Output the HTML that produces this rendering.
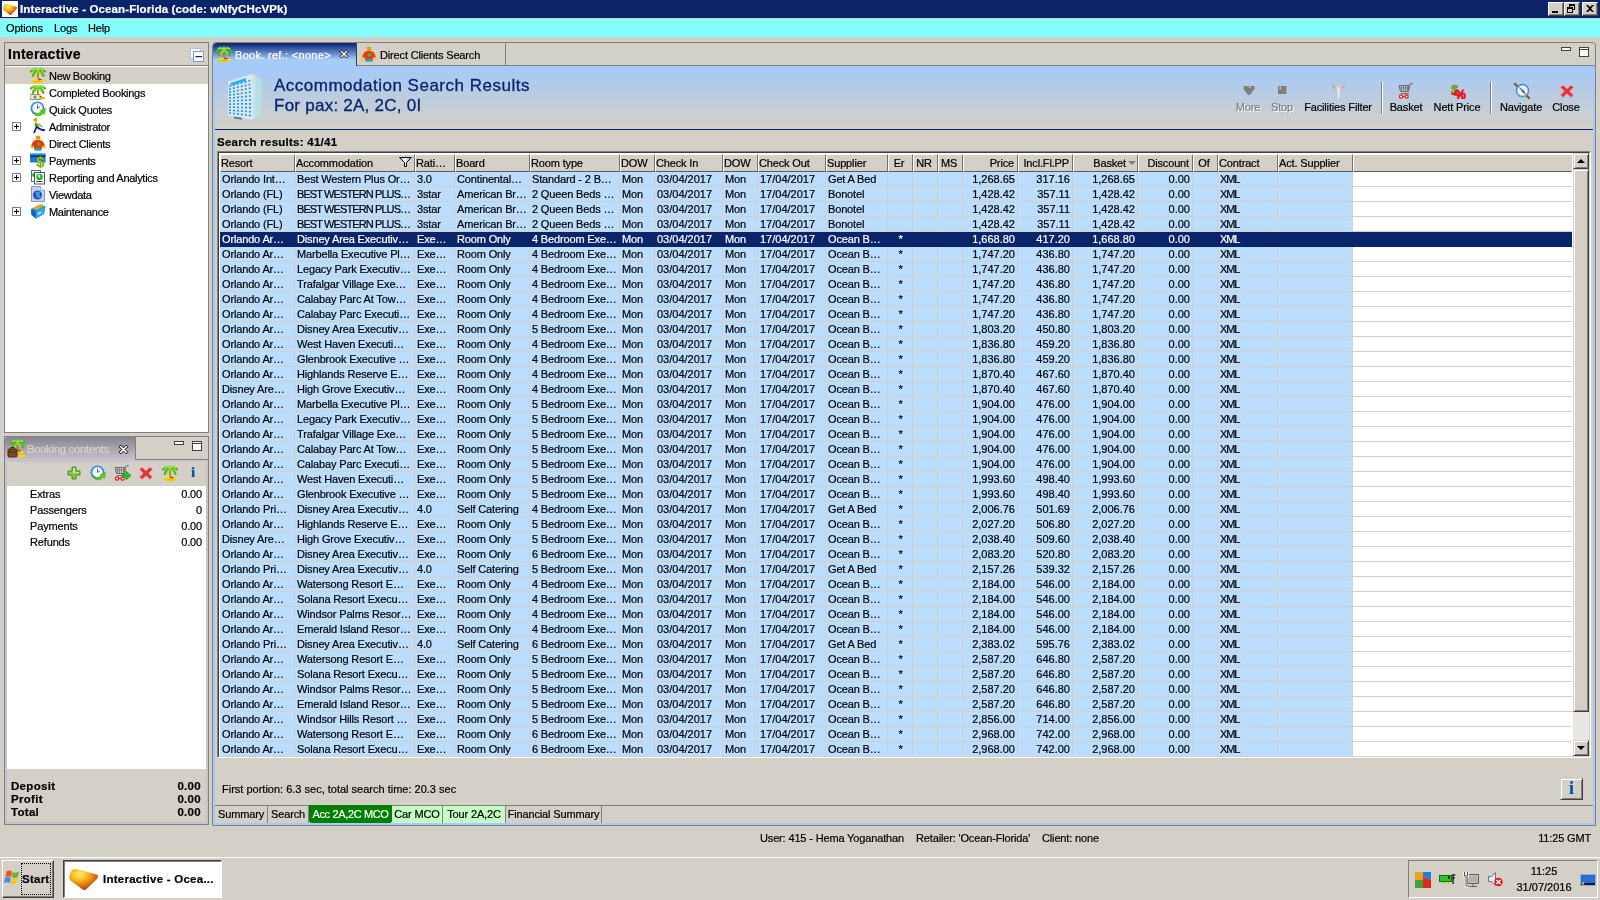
<!DOCTYPE html>
<html><head><meta charset="utf-8"><title>Interactive - Ocean-Florida</title>
<style>
*{box-sizing:border-box;margin:0;padding:0}
html,body{width:1600px;height:900px;overflow:hidden;background:#D4D0C8;font:11px "Liberation Sans","DejaVu Sans",sans-serif;color:#000;letter-spacing:-.15px;-webkit-text-stroke:.2px}
.a{position:absolute}
b,.b{font-weight:bold;font-size:11.5px;letter-spacing:.25px}
#title{left:0;top:0;width:1600px;height:18px;background:#0A246A;color:#fff}
#title .t{left:20px;top:3px;white-space:nowrap;letter-spacing:.12px}
#menu{left:0;top:18px;width:1600px;height:19px;background:#84FFFF;border-top:1px solid #D4D0C8}
#menu span{position:absolute;top:3px}
.cap{width:16px;height:14px;top:2px;background:#D4D0C8;border:1px solid;border-color:#fff #404040 #404040 #fff;box-shadow:inset -1px -1px #808080}
/* table */
.th{position:absolute;top:154px;height:18px;background:#D4D0C8;border:1px solid;border-color:#fff #77736C #5C5954 #fff;white-space:nowrap;overflow:hidden;line-height:15px;padding:1px 3px 0 0}
.th.r{text-align:right;padding-right:3px}
.th.c{text-align:center}
.tr{position:absolute;left:220px;width:1352px;height:15px;background:#fff;border-bottom:1px solid #D4D0C8}
.td{position:absolute;top:0;height:14px;background:#BBDDFF;border-right:1px solid #D4D0C8;white-space:nowrap;overflow:hidden;line-height:14px;padding:0 1px 0 2px}
.td.r,.td.n{letter-spacing:0}
.td.r{text-align:right;padding-right:2px}
.td.u{letter-spacing:-.9px}
.td.x{letter-spacing:-1.1px}
.td.c{text-align:center}
.tr.sel{background:#0A246A;border-bottom-color:#0A246A;color:#fff}
.tr.sel .td{background:#0A246A;border-right-color:#0A246A;height:15px}
.flt{position:absolute;right:2px;top:2px}
.sortarr{position:absolute;right:1px;top:6px;width:0;height:0;border:4px solid transparent;border-top:4px solid #808080;border-bottom:0}

/* left panel */
#lp{left:4px;top:42px;width:205px;height:391px;border:1px solid #808080;background:#D4D0C8}
#lph{left:0;top:0;width:203px;height:23px;border-bottom:1px solid #808080;box-shadow:0 1px #fff}
#lph .ttl{left:3px;top:3px;font:bold 14px "Liberation Sans",sans-serif;letter-spacing:.25px}
#tree{left:0;top:24px;width:203px;height:365px;background:#fff}
.ti{position:absolute;left:0;width:203px;height:17px;line-height:19px;padding-left:44px;white-space:nowrap;letter-spacing:-.3px}
.ti.sel{background:#D4D0C8}
.ti svg{position:absolute;left:25px;top:0}
.pm{position:absolute;left:7px;top:4px;width:9px;height:9px;border:1px solid #808080;background:#fff}
.pm:before{content:"";position:absolute;left:1px;top:3px;width:5px;height:1px;background:#000}
.pm:after{content:"";position:absolute;left:3px;top:1px;width:1px;height:5px;background:#000}
/* booking contents */
#bc{left:4px;top:436px;width:205px;height:389px;border:1px solid #808080;border-top:0;background:#D4D0C8}
#bctab{left:0;top:1px;width:131px;height:23px;border-right:1px solid #808080;border-bottom:0;background:linear-gradient(#86848C,#C6C3CD);color:#D8D4CC;border-radius:3px 0 0 0}
#bcline{left:130px;top:23px;width:74px;height:1px;background:#808080}
#bctop{left:0;top:0;width:204px;height:1px;background:#808080}
#bclist{left:2px;top:50px;width:199px;height:283px;background:#fff}
.bi{position:absolute;left:0;width:199px;height:16px;line-height:16px}
.bi span{position:absolute;left:23px}
.bi em{position:absolute;right:4px;font-style:normal}
.tot{position:absolute;left:6px;width:190px;height:13px;line-height:13px;font-weight:bold;font-size:11.5px;letter-spacing:.3px}
.tot em{position:absolute;right:0;font-style:normal}
/* main panel */
#mp{left:213px;top:66px;width:1382px;height:759px;border:2px solid #A5CBF7;border-top:0;background:#D4D0C8}
#tabbar{left:212px;top:42px;width:1384px;height:784px;border:1px solid #808080;border-radius:4px 4px 0 0}
#tab1{left:213px;top:43px;width:144px;height:23px;background:linear-gradient(#0A246A 0%,#1C3A8C 12%,#A5CBF7 72%);color:#fff;border-radius:4px 0 0 0;border-right:1px solid #404040}
#tab2{left:357px;top:43px;width:149px;height:22px;border-right:1px solid #808080}
#tabline{left:357px;top:65px;width:1238px;height:1px;background:#808080}
#hdr{left:215px;top:66px;width:1378px;height:63px;background:linear-gradient(#A3C9F9 0%,#D4D0C8 100%)}
#hline{left:215px;top:129px;width:1378px;height:1px;background:#0A246A}
.h1{left:274px;color:#0A246A;-webkit-text-stroke:.3px #0A246A;font:17px "Liberation Sans",sans-serif;white-space:nowrap;letter-spacing:.5px}
.tb{position:absolute;top:101px;height:13px;line-height:13px;white-space:nowrap;text-align:center}
.tb.dis{color:#808080;text-shadow:1px 1px 0 #fff}
.tsep{position:absolute;top:82px;width:2px;height:32px;border-left:1px solid #808080;border-right:1px solid #fff}
#tblframe{left:217px;top:151px;width:1374px;height:607px;border:1px solid;border-color:#808080 #fff #fff #808080;background:#fff}
#tblframe2{left:218px;top:152px;width:1372px;height:605px;border:1px solid;border-color:#404040 #D4D0C8 #D4D0C8 #404040}
#sb{left:1573px;top:153px;width:16px;height:603px;background:#E9E7E3}
.btn3d{position:absolute;background:#D4D0C8;border:1px solid;border-color:#D4D0C8 #404040 #404040 #D4D0C8;box-shadow:inset 1px 1px #fff,inset -1px -1px #808080}
.btabs{position:absolute;top:806px;height:17px;line-height:16px;text-align:center;border-right:1px solid #808080;white-space:nowrap}
#status{left:0;top:832px;width:1600px;height:13px;line-height:13px}
/* taskbar */
#tbline{left:0;top:857px;width:1600px;height:1px;background:#fff}
#start{left:2px;top:860px;width:52px;height:38px;border-color:#fff #404040 #404040 #fff;box-shadow:inset -1px -1px #808080}
#task{left:63px;top:860px;width:159px;height:38px;background:#fff;border:1px solid;border-color:#404040 #fff #fff #404040;box-shadow:inset 1px 1px #808080}
#tray{left:1408px;top:860px;width:190px;height:38px;border:1px solid;border-color:#808080 #fff #fff #808080}
</style></head><body><div id="root" style="position:absolute;left:0;top:0;width:1600px;height:900px;will-change:transform">
<svg width="0" height="0" style="position:absolute"><defs><radialGradient id="gg" cx=".36" cy=".25" r=".75"><stop offset="0" stop-color="#FFF080"/><stop offset=".3" stop-color="#FFC828"/><stop offset=".6" stop-color="#E88A10"/><stop offset="1" stop-color="#B84008"/></radialGradient></defs></svg>

<div id="title" class="a"><div class="a" style="left:2px;top:1px;width:16px;height:16px;background:#fff"></div><svg class="a" style="left:3px;top:4px;" width="14" height="11" viewBox="0 0 28 20" preserveAspectRatio="none"><path d="M4 .5C7 -.3 10 .3 13 1.500C17 3 22 4 27.500 5.500C28.500 7 27.500 9 26 10.500L17 19C15.500 20.300 14 20.300 12.500 19L2 11.500C-.3 9.500 -.3 6.500 1.500 3.500C2.200 2 3 1 4 .5z" fill="url(#gg)"/></svg><b class="a t">Interactive - Ocean-Florida (code: wNfyCHcVPk)</b></div>
<div id="menu" class="a"><span style="left:6px">Options</span><span style="left:54px">Logs</span><span style="left:88px">Help</span></div>

<div class="a cap" style="left:1548px"><i class="a" style="left:3px;top:8px;width:6px;height:2px;background:#000"></i></div>
<div class="a cap" style="left:1564px"><i class="a" style="left:4px;top:1px;width:6px;height:6px;border:1px solid #000;border-top-width:2px"></i><i class="a" style="left:2px;top:4px;width:6px;height:6px;border:1px solid #000;border-top-width:2px;background:#D4D0C8"></i></div>
<div class="a cap" style="left:1582px"><svg class="a" style="left:3px;top:2px" width="8" height="7" viewBox="0 0 8 7"><path d="M0 0h2l2 2 2-2h2L5 3.5 8 7H6L4 5 2 7H0l3-3.500z" fill="#000"/></svg></div>

<div id="lp" class="a">
 <div id="lph" class="a"><span class="a ttl">Interactive</span>
  <svg class="a" style="left:185px;top:5px" width="14" height="14" viewBox="0 0 14 14"><rect x=".5" y=".5" width="10" height="10" fill="#fff" stroke="#B0C4E0"/><rect x="3.500" y="3.500" width="10" height="10" fill="#fff" stroke="#7A96DF"/><rect x="5.500" y="8" width="6.500" height="1.200" fill="#0A246A"/></svg>
 </div>
 <div id="tree" class="a">
  <div class="ti sel" style="top:0"><svg class="" style="" width="16" height="16" viewBox="0 0 16 16"><ellipse cx="8" cy="14" rx="6.800" ry="1.900" fill="#FFD800"/><path d="M3 14.800h9" stroke="#E8A800" stroke-width="1"/>
 <path d="M8 4.500Q7.200 8.500 9 13.500" stroke="#C87A14" stroke-width="1.800" fill="none"/><path d="M9 12.500h2.500" stroke="#6A3A00" stroke-width="1"/>
 <g fill="none" stroke-linecap="round">
 <path d="M8 4Q4.500 .5 1 4.500M8 4Q11.500 .5 15 4.500M8 4.500Q3.500 4.500 3 9M8 4.500Q12.500 4.500 13.500 9" stroke="#4CB414" stroke-width="2.200"/>
 <path d="M8 3.500Q5 1 2.500 2.500M8 3.500Q11 1 13.500 2.500M7.500 5Q5.500 5.500 5 8M9 5Q11 5.500 11.500 8M8 3V1" stroke="#94E63C" stroke-width="1.500"/>
 </g></svg>New Booking</div>
  <div class="ti" style="top:17px"><svg width="16" height="16" viewBox="0 0 16 16"><ellipse cx="8" cy="14" rx="6.800" ry="1.900" fill="#FFD800"/><path d="M3 14.800h9" stroke="#E8A800" stroke-width="1"/>
 <path d="M8 4.500Q7.200 8.500 9 13.500" stroke="#C87A14" stroke-width="1.800" fill="none"/><path d="M9 12.500h2.500" stroke="#6A3A00" stroke-width="1"/>
 <g fill="none" stroke-linecap="round">
 <path d="M8 4Q4.500 .5 1 4.500M8 4Q11.500 .5 15 4.500M8 4.500Q3.500 4.500 3 9M8 4.500Q12.500 4.500 13.500 9" stroke="#4CB414" stroke-width="2.200"/>
 <path d="M8 3.500Q5 1 2.500 2.500M8 3.500Q11 1 13.500 2.500M7.500 5Q5.500 5.500 5 8M9 5Q11 5.500 11.500 8M8 3V1" stroke="#94E63C" stroke-width="1.500"/>
 </g><rect x="0" y="10.500" width="10" height="5" fill="#E8E8D0" stroke="#808070" stroke-width=".8"/><circle cx="5" cy="13" r="1.500" fill="#808070"/><ellipse cx="12.500" cy="14" rx="2.500" ry="1" fill="#F0B000"/></svg>Completed Bookings</div>
  <div class="ti" style="top:34px"><svg class="" style="" width="16" height="16" viewBox="0 0 16 16"><circle cx="7.500" cy="7.500" r="6.900" fill="#1E8CFF"/><circle cx="7.500" cy="7.200" r="5.100" fill="#fff" stroke="#A8B8C8" stroke-width=".6"/>
 <path d="M7.500 3.500V7.500l2.500-1.800" stroke="#505050" stroke-width=".9" fill="none"/>
 <path d="M3 11.500c2.500 2 5.800 1.800 8-.8l-1.300-1 5.800-2.200-.8 6-1.400-1.100C10.500 16 5 15.800 3 11.500z" fill="#5CCB1E" stroke="#3A9A10" stroke-width=".4"/></svg>Quick Quotes</div>
  <div class="ti" style="top:51px"><i class="pm"></i><svg width="16" height="16" viewBox="0 0 16 16"><circle cx="5.500" cy="2.500" r="1.800" fill="#FFA800"/><path d="M4 1.500l3-1" stroke="#E06000" stroke-width="1"/><path d="M5 4.500l5 1.500-1 4-4.500-2z" fill="#40A840"/><path d="M8 5l1.500 3.500" stroke="#FFD800" stroke-width="1.500"/><path d="M6 8.500l3 2 3.500 1.500 2.500.200M6.500 9L5 12.500l-1 2.500" stroke="#1818A0" stroke-width="1.800" fill="none"/><path d="M9.500 6.500l3 2.500" stroke="#208820" stroke-width="1"/></svg>Administrator</div>
  <div class="ti" style="top:68px"><svg class="" style="" width="16" height="16" viewBox="0 0 16 16"><circle cx="8" cy="2.800" r="2.400" fill="#FFC000"/><path d="M5.800 1.800h4.400M6 3.500h4" stroke="#E07000" stroke-width=".8"/>
 <path d="M2.500 7.500C3.500 5.500 5.500 5 8 5s4.500.5 5.500 2.500l1.500 3.500-2.200 1.200-.8-1.700V14h-8v-3.500l-.8 1.700L1 11z" fill="#F03810"/>
 <path d="M1 10.500l2.200 1.200-.2 2.300-2.500-1zM15 10.500l-2.200 1.200.2 2.300 2.500-1z" fill="#FFC800"/>
 <rect x="6.800" y="7.500" width="3.500" height="3" fill="#30B840"/>
 <rect x="4.500" y="13.200" width="7" height="2.500" fill="#18A8C8"/></svg>Direct Clients</div>
  <div class="ti" style="top:85px"><i class="pm"></i><svg width="16" height="16" viewBox="0 0 16 16"><path d="M0 1.500h15.500v9H0z" fill="#1E7AD8"/><path d="M0 3.200h15.500v2H0z" fill="#0A3C8A"/><path d="M0 1.500h15.500v1H0z" fill="#4AA8F0"/><text x="6.500" y="15" font-family="Liberation Sans,sans-serif" font-weight="bold" font-size="14" fill="#B8E020" stroke="#5C8A00" stroke-width=".5">$</text></svg>Payments</div>
  <div class="ti" style="top:102px"><i class="pm"></i><svg width="16" height="16" viewBox="0 0 16 16"><rect x="1.500" y="1.500" width="9" height="11" fill="#fff" stroke="#507088"/><circle cx="4" cy="6" r="2" fill="#30B030"/><rect x="4.500" y="3.500" width="10" height="11.500" fill="#fff" stroke="#405878"/><circle cx="9.500" cy="8" r="3.300" fill="#28B428"/><circle cx="9" cy="7" r="1.500" fill="#90F070"/><path d="M9.500 6v2.500" stroke="#fff" stroke-width="1"/><path d="M6.500 12.500h6" stroke="#603020" stroke-width="1"/></svg>Reporting and Analytics</div>
  <div class="ti" style="top:119px"><svg width="16" height="16" viewBox="0 0 16 16"><path d="M1.500 .5h9l4 4v11h-13z" fill="#C4D4EC" stroke="#8098C0"/><path d="M10.500 .5v4h4" fill="#fff" stroke="#8098C0" stroke-width=".7"/><circle cx="7.500" cy="9" r="4.500" fill="#2840D0"/><path d="M5 7c1.500-2 4-2 5-.5-1 1.500-.5 3 1 4-1.500 2-4 2-5.500.5C6.500 10 6.500 8 5 7z" fill="#30B0C8"/><circle cx="6" cy="10.500" r="1.800" fill="#8030C0" opacity=".7"/></svg>Viewdata</div>
  <div class="ti" style="top:136px"><i class="pm"></i><svg width="16" height="16" viewBox="0 0 16 16"><path d="M1 6l9-4.500 5.500 2L14 11l-8 4.500L1.500 12z" fill="#1E90E0"/><path d="M1 6l5 2.500L6 15.500 1.500 12z" fill="#1068B8"/><path d="M6 8.500L15.500 3.500 14 11l-8 4.500z" fill="#38A8F0"/><path d="M2.500 5l8-4 4 1.500-8 4.200z" fill="#FFD040"/><path d="M3.500 5.500l8-4M5 6.200l8-4" stroke="#E08000" stroke-width=".9"/><path d="M8 11l3-1.700" stroke="#fff" stroke-width="1.200"/></svg>Maintenance</div>
 </div>
</div>

<div id="bc" class="a">
 <div id="bctop" class="a"></div>
 <div id="bctab" class="a"><svg class="a" style="left:2px;top:2px" width="20" height="20" viewBox="0 0 20 20"><g transform="translate(3,0) scale(.95)"><ellipse cx="8" cy="14" rx="6.800" ry="1.900" fill="#FFD800"/><path d="M3 14.800h9" stroke="#E8A800" stroke-width="1"/>
 <path d="M8 4.500Q7.200 8.500 9 13.500" stroke="#C87A14" stroke-width="1.800" fill="none"/><path d="M9 12.500h2.500" stroke="#6A3A00" stroke-width="1"/>
 <g fill="none" stroke-linecap="round">
 <path d="M8 4Q4.500 .5 1 4.500M8 4Q11.500 .5 15 4.500M8 4.500Q3.500 4.500 3 9M8 4.500Q12.500 4.500 13.500 9" stroke="#4CB414" stroke-width="2.200"/>
 <path d="M8 3.500Q5 1 2.500 2.500M8 3.500Q11 1 13.500 2.500M7.500 5Q5.500 5.500 5 8M9 5Q11 5.500 11.500 8M8 3V1" stroke="#94E63C" stroke-width="1.500"/>
 </g></g><rect x="1" y="10" width="9" height="8" rx="1" fill="#7A4A20" stroke="#3A2008" stroke-width=".8"/><path d="M4 10V8.500h3V10" stroke="#3A2008" fill="none"/><path d="M1 13h9" stroke="#3A2008" stroke-width=".6"/><ellipse cx="15" cy="17" rx="3.500" ry="1.500" fill="#FFD000"/></svg><svg class="a" style="left:113px;top:7px" width="11" height="11" viewBox="0 0 10 10"><path d="M1 2.500L2.500 1 5 3.500 7.500 1 9 2.500 6.500 5 9 7.500 7.500 9 5 6.500 2.500 9 1 7.500 3.500 5z" fill="#fff" stroke="#000" stroke-width=".9"/></svg><span class="a" style="left:22px;top:6px;white-space:nowrap">Booking contents</span></div>
 <div id="bcline" class="a"></div><div class="a" style="left:0;top:24px;width:203px;height:364px;border:2px solid #C6C3CD"></div><div class="a" style="left:169px;top:5px;width:10px;height:4px;border:1px solid #404040;background:#fff"></div><div class="a" style="left:187px;top:5px;width:10px;height:10px;border:1px solid #404040;background:#fff"><i class="a" style="left:0;top:1px;width:8px;height:1px;background:#404040"></i></div><svg class="a" style="left:61px;top:29px" width="16" height="16" viewBox="0 0 16 16"><path d="M6 2h4v4h4v4h-4v4H6v-4H2V6h4z" fill="#88C848" stroke="#4C8A20" stroke-width="1"/><path d="M7 3h2v4h4v1H7z" fill="#C0E890"/></svg><svg class="a" style="left:85px;top:29px;" width="16" height="16" viewBox="0 0 16 16"><circle cx="7.500" cy="7.500" r="6.900" fill="#1E8CFF"/><circle cx="7.500" cy="7.200" r="5.100" fill="#fff" stroke="#A8B8C8" stroke-width=".6"/>
 <path d="M7.500 3.500V7.500l2.500-1.800" stroke="#505050" stroke-width=".9" fill="none"/>
 <path d="M3 11.500c2.500 2 5.800 1.800 8-.8l-1.300-1 5.800-2.200-.8 6-1.400-1.100C10.500 16 5 15.800 3 11.500z" fill="#5CCB1E" stroke="#3A9A10" stroke-width=".4"/></svg><svg class="a" style="left:109px;top:29px;" width="16" height="16" viewBox="0 0 16 16"><path d="M1 2.500h10l-1 6H2.500z" fill="none" stroke="#707070" stroke-width="1"/>
 <path d="M3.500 3v5M5.500 3v5M7.500 3v5M9.500 3v5M1.500 5h9" stroke="#707070" stroke-width=".8"/>
 <path d="M10.500 8.500L12 .8h3" fill="none" stroke="#707070" stroke-width="1"/>
 <path d="M3 10.500h8" stroke="#707070" stroke-width="1"/>
 <circle cx="3" cy="13.500" r="1.600" fill="#fff" stroke="#F01010" stroke-width="1.200"/><circle cx="8.500" cy="13.500" r="1.600" fill="#fff" stroke="#F01010" stroke-width="1.200"/><path d="M4.600 13.500h2.300" stroke="#F01010"/></svg><svg class="a" style="left:117px;top:35px" width="9" height="9" viewBox="0 0 9 9"><path d="M0 3h4V0l5 4.500L4 9V6H0z" fill="#20C020" stroke="#108010" stroke-width=".6"/></svg><svg class="a" style="left:133px;top:29px;" width="16" height="16" viewBox="0 0 16 16"><path d="M4 2L8 5.800 12 2 14.500 4.500 10.700 8.300 14.500 12 12 14.500 8 10.800 4 14.500 1.500 12 5.300 8.300 1.500 4.500z" fill="#E6323C" stroke="#F4A0A4" stroke-width=".7"/></svg><svg class="a" style="left:157px;top:29px;" width="16" height="16" viewBox="0 0 16 16"><ellipse cx="8" cy="14" rx="6.800" ry="1.900" fill="#FFD800"/><path d="M3 14.800h9" stroke="#E8A800" stroke-width="1"/>
 <path d="M8 4.500Q7.200 8.500 9 13.500" stroke="#C87A14" stroke-width="1.800" fill="none"/><path d="M9 12.500h2.500" stroke="#6A3A00" stroke-width="1"/>
 <g fill="none" stroke-linecap="round">
 <path d="M8 4Q4.500 .5 1 4.500M8 4Q11.500 .5 15 4.500M8 4.500Q3.500 4.500 3 9M8 4.500Q12.500 4.500 13.500 9" stroke="#4CB414" stroke-width="2.200"/>
 <path d="M8 3.500Q5 1 2.500 2.500M8 3.500Q11 1 13.500 2.500M7.500 5Q5.500 5.500 5 8M9 5Q11 5.500 11.500 8M8 3V1" stroke="#94E63C" stroke-width="1.500"/>
 </g></svg><span class="a" style="left:186px;top:28px;font:bold 15px 'Liberation Serif',serif;color:#0A50A0;letter-spacing:0">i</span>
 <div id="bclist" class="a">
  <div class="bi" style="top:0"><span>Extras</span><em>0.00</em></div>
  <div class="bi" style="top:16px"><span>Passengers</span><em>0</em></div>
  <div class="bi" style="top:32px"><span>Payments</span><em>0.00</em></div>
  <div class="bi" style="top:48px"><span>Refunds</span><em>0.00</em></div>
 </div>
 <div class="tot" style="top:344px">Deposit<em>0.00</em></div>
 <div class="tot" style="top:357px">Profit<em>0.00</em></div>
 <div class="tot" style="top:370px">Total<em>0.00</em></div>
</div>

<div id="mp" class="a"></div>
<div id="tabbar" class="a"></div>
<div id="hdr" class="a"></div>
<div id="hline" class="a"></div><svg class="a" style="left:227px;top:73px" width="36" height="48" viewBox="0 0 36 48"><defs><linearGradient id="bs" x1="0" x2="1"><stop offset="0" stop-color="#D8E8EC"/><stop offset=".5" stop-color="#B0E0E8"/><stop offset="1" stop-color="#C8D4DC"/></linearGradient></defs><path d="M1 8.5L25 1V46.5L1 43z" fill="#DCE6EE"/><path d="M25 1L35 5.500V42L25 46.500z" fill="url(#bs)"/><path d="M3.500 10L19 5v3L3.500 13z" fill="#28B0FF"/><path d="M2 13.3L24 7.3" stroke="#2098F0" stroke-width="1.700" stroke-dasharray="2 2"/><path d="M2 16.2L24 11.2" stroke="#2098F0" stroke-width="1.700" stroke-dasharray="2 2"/><path d="M2 19.2L24 15.1" stroke="#2098F0" stroke-width="1.700" stroke-dasharray="2 2"/><path d="M2 22.2L24 19.0" stroke="#2098F0" stroke-width="1.700" stroke-dasharray="2 2"/><path d="M2 25.2L24 23.0" stroke="#2098F0" stroke-width="1.700" stroke-dasharray="2 2"/><path d="M2 28.1L24 26.9" stroke="#2098F0" stroke-width="1.700" stroke-dasharray="2 2"/><path d="M2 31.1L24 30.8" stroke="#2098F0" stroke-width="1.700" stroke-dasharray="2 2"/><path d="M2 34.1L24 34.7" stroke="#2098F0" stroke-width="1.700" stroke-dasharray="2 2"/><path d="M2 37.1L24 38.7" stroke="#2098F0" stroke-width="1.700" stroke-dasharray="2 2"/><path d="M2 40.0L24 42.6" stroke="#2098F0" stroke-width="1.700" stroke-dasharray="2 2"/><path d="M7 44.500l8 1.200" stroke="#707880" stroke-width="2"/></svg><svg class="a" style="left:1243px;top:85px" width="12" height="11" viewBox="0 0 12 11"><path d="M.5 1h11v3L7 10H5L.5 4z" fill="#808080"/><rect x="6" y="1.500" width="1.500" height="1.500" fill="#D4D0C8"/></svg><svg class="a" style="left:1278px;top:86px" width="9" height="8" viewBox="0 0 9 8"><rect width="8.500" height="8" fill="#808080"/><rect x="1.500" y="1" width="1.500" height="2" fill="#D4D0C8"/></svg><svg class="a" style="left:1331px;top:83px" width="15" height="16" viewBox="0 0 15 16"><defs><linearGradient id="fg" x1="0" x2="1"><stop offset="0" stop-color="#808080"/><stop offset=".5" stop-color="#ECECEC"/><stop offset="1" stop-color="#8C8C8C"/></linearGradient></defs><path d="M1 2.500C1 .8 14 .8 14 2.500L8.500 9.500V15.500L6.500 14V9.500z" fill="url(#fg)"/><ellipse cx="7.500" cy="2.500" rx="6" ry="1.500" fill="#C8C8C8"/></svg><svg class="a" style="left:1398px;top:83px;" width="16" height="16" viewBox="0 0 16 16"><path d="M1 2.500h10l-1 6H2.500z" fill="none" stroke="#707070" stroke-width="1"/>
 <path d="M3.500 3v5M5.500 3v5M7.500 3v5M9.500 3v5M1.500 5h9" stroke="#707070" stroke-width=".8"/>
 <path d="M10.500 8.500L12 .8h3" fill="none" stroke="#707070" stroke-width="1"/>
 <path d="M3 10.500h8" stroke="#707070" stroke-width="1"/>
 <circle cx="3" cy="13.500" r="1.600" fill="#fff" stroke="#F01010" stroke-width="1.200"/><circle cx="8.500" cy="13.500" r="1.600" fill="#fff" stroke="#F01010" stroke-width="1.200"/><path d="M4.600 13.500h2.300" stroke="#F01010"/></svg><svg class="a" style="left:1450px;top:83px" width="16" height="16" viewBox="0 0 16 16"><text x="1" y="11" font-family="Liberation Sans,sans-serif" font-weight="bold" font-size="13" fill="#8CB828" stroke="#5C8A10" stroke-width=".6">$</text><rect x="1.500" y="10" width="4" height="2" fill="#F01020"/><text x="5" y="15.500" font-family="Liberation Sans,sans-serif" font-weight="bold" font-size="12" fill="#F01020" stroke="#F01020" stroke-width=".8">%</text></svg><svg class="a" style="left:1513px;top:82px" width="18" height="18" viewBox="0 0 18 18"><path d="M2 2l3 3M13 13l3 3" stroke="#8A5A20" stroke-width="2.400" stroke-linecap="round"/><circle cx="9.500" cy="8.500" r="6" fill="#E8F4FC" stroke="#3C88D8" stroke-width="1.400"/><path d="M5.500 4.500L10.800 8l-2.200 1.600z" fill="#2890F0"/><path d="M13 13L8.600 9.600 10.800 8z" fill="#F02010"/><path d="M5 13.500c2.500 2 6 2 8.500-.5" stroke="#30C8E0" stroke-width="1.200" fill="none"/></svg><svg class="a" style="left:1559px;top:83px;" width="16" height="16" viewBox="0 0 16 16"><path d="M4 2L8 5.800 12 2 14.500 4.500 10.700 8.300 14.500 12 12 14.500 8 10.800 4 14.500 1.500 12 5.300 8.300 1.500 4.500z" fill="#E6323C" stroke="#F4A0A4" stroke-width=".7"/></svg>
<div id="tab1" class="a"><svg class="a" style="left:3px;top:3px;" width="16" height="16" viewBox="0 0 16 16"><ellipse cx="8" cy="14" rx="6.800" ry="1.900" fill="#FFD800"/><path d="M3 14.800h9" stroke="#E8A800" stroke-width="1"/>
 <path d="M8 4.500Q7.200 8.500 9 13.500" stroke="#C87A14" stroke-width="1.800" fill="none"/><path d="M9 12.500h2.500" stroke="#6A3A00" stroke-width="1"/>
 <g fill="none" stroke-linecap="round">
 <path d="M8 4Q4.500 .5 1 4.500M8 4Q11.500 .5 15 4.500M8 4.500Q3.500 4.500 3 9M8 4.500Q12.500 4.500 13.500 9" stroke="#4CB414" stroke-width="2.200"/>
 <path d="M8 3.500Q5 1 2.500 2.500M8 3.500Q11 1 13.500 2.500M7.500 5Q5.500 5.500 5 8M9 5Q11 5.500 11.500 8M8 3V1" stroke="#94E63C" stroke-width="1.500"/>
 </g></svg><svg class="a" style="left:126px;top:6px" width="10" height="10" viewBox="0 0 10 10"><path d="M1 2.500L2.500 1 5 3.500 7.500 1 9 2.500 6.500 5 9 7.500 7.500 9 5 6.500 2.500 9 1 7.500 3.500 5z" fill="#fff" stroke="#000" stroke-width=".9"/></svg><span class="a" style="left:22px;top:6px;white-space:nowrap;letter-spacing:.3px">Book. ref.: &lt;none&gt;</span></div>
<div id="tab2" class="a"><svg class="a" style="left:4px;top:3px;" width="16" height="16" viewBox="0 0 16 16"><circle cx="8" cy="2.800" r="2.400" fill="#FFC000"/><path d="M5.800 1.800h4.400M6 3.500h4" stroke="#E07000" stroke-width=".8"/>
 <path d="M2.500 7.500C3.500 5.500 5.500 5 8 5s4.500.5 5.500 2.500l1.500 3.500-2.200 1.200-.8-1.700V14h-8v-3.500l-.8 1.700L1 11z" fill="#F03810"/>
 <path d="M1 10.500l2.200 1.200-.2 2.300-2.500-1zM15 10.500l-2.200 1.200.2 2.300 2.500-1z" fill="#FFC800"/>
 <rect x="6.800" y="7.500" width="3.500" height="3" fill="#30B840"/>
 <rect x="4.500" y="13.200" width="7" height="2.500" fill="#18A8C8"/></svg><span class="a" style="left:23px;top:6px;white-space:nowrap">Direct Clients Search</span></div>
<div id="tabline" class="a"></div><div class="a" style="left:1561px;top:47px;width:10px;height:4px;border:1px solid #404040;background:#fff"></div><div class="a" style="left:1579px;top:47px;width:10px;height:10px;border:1px solid #404040;background:#fff"><i class="a" style="left:0;top:1px;width:8px;height:1px;background:#404040"></i></div>
<div class="a h1" style="top:76px">Accommodation Search Results</div>
<div class="a h1" style="top:96px;letter-spacing:.25px">For pax: 2A, 2C, 0I</div>
<div class="tb dis" style="left:1228px;width:40px">More</div>
<div class="tb dis" style="left:1262px;width:40px">Stop</div>
<div class="tb" style="left:1298px;width:80px">Facilities Filter</div>
<div class="tsep" style="left:1381px"></div>
<div class="tb" style="left:1386px;width:40px">Basket</div>
<div class="tb" style="left:1427px;width:60px">Nett Price</div>
<div class="tsep" style="left:1490px"></div>
<div class="tb" style="left:1491px;width:60px">Navigate</div>
<div class="tb" style="left:1546px;width:40px">Close</div>
<b class="a" style="left:217px;top:136px;white-space:nowrap">Search results: 41/41</b>
<div id="tblframe" class="a"></div>
<div id="tblframe2" class="a"></div>
<div class="th l" style="left:220px;width:75px"><span>Resort</span></div>
<div class="th l" style="left:295px;width:120px"><span>Accommodation</span><svg class="flt" width="13" height="11" viewBox="0 0 13 11"><defs><linearGradient id="flg" x1="0" x2="1"><stop offset="0" stop-color="#8CA8D0"/><stop offset=".45" stop-color="#fff"/><stop offset="1" stop-color="#7C98C8"/></linearGradient></defs><path d="M0.5 0.5H12.5L7.5 5.5V9.5H5.5V5.5Z" fill="url(#flg)" stroke="#000" stroke-width="1"/></svg></div>
<div class="th l" style="left:415px;width:40px"><span>Rati…</span></div>
<div class="th l" style="left:455px;width:75px"><span>Board</span></div>
<div class="th l" style="left:530px;width:90px"><span>Room type</span></div>
<div class="th l" style="left:620px;width:35px"><span>DOW</span></div>
<div class="th l" style="left:655px;width:68px"><span>Check In</span></div>
<div class="th l" style="left:723px;width:35px"><span>DOW</span></div>
<div class="th l" style="left:758px;width:68px"><span>Check Out</span></div>
<div class="th l" style="left:826px;width:62px"><span>Supplier</span></div>
<div class="th c" style="left:888px;width:25px"><span>Er</span></div>
<div class="th c" style="left:913px;width:25px"><span>NR</span></div>
<div class="th c" style="left:938px;width:25px"><span>MS</span></div>
<div class="th r" style="left:963px;width:55px"><span>Price</span></div>
<div class="th r" style="left:1018px;width:55px"><span>Incl.Fl.PP</span></div>
<div class="th r" style="left:1073px;width:65px;padding-right:11px"><span>Basket</span><i class="sortarr"></i></div>
<div class="th r" style="left:1138px;width:55px"><span>Discount</span></div>
<div class="th c" style="left:1193px;width:25px"><span>Of</span></div>
<div class="th l" style="left:1218px;width:60px"><span>Contract</span></div>
<div class="th l" style="left:1278px;width:75px"><span>Act. Supplier</span></div>
<div class="th l" style="left:1353px;width:219px;border-right-color:#D4D0C8"></div>
<div class="tr" style="top:172px"><div class="td l" style="left:0px;width:75px">Orlando Int…</div><div class="td l" style="left:75px;width:120px">Best Western Plus Or…</div><div class="td l" style="left:195px;width:40px">3.0</div><div class="td l" style="left:235px;width:75px">Continental…</div><div class="td l" style="left:310px;width:90px">Standard - 2 B…</div><div class="td l" style="left:400px;width:35px">Mon</div><div class="td l n" style="left:435px;width:68px">03/04/2017</div><div class="td l" style="left:503px;width:35px">Mon</div><div class="td l n" style="left:538px;width:68px">17/04/2017</div><div class="td l" style="left:606px;width:62px">Get A Bed</div><div class="td c" style="left:668px;width:25px"></div><div class="td c" style="left:693px;width:25px"></div><div class="td c" style="left:718px;width:25px"></div><div class="td r" style="left:743px;width:55px">1,268.65</div><div class="td r" style="left:798px;width:55px">317.16</div><div class="td r" style="left:853px;width:65px">1,268.65</div><div class="td r" style="left:918px;width:55px">0.00</div><div class="td c" style="left:973px;width:25px"></div><div class="td l x" style="left:998px;width:60px">XML</div><div class="td l" style="left:1058px;width:75px"></div></div>
<div class="tr" style="top:187px"><div class="td l" style="left:0px;width:75px">Orlando (FL)</div><div class="td l u" style="left:75px;width:120px">BEST WESTERN PLUS…</div><div class="td l" style="left:195px;width:40px">3star</div><div class="td l" style="left:235px;width:75px">American Br…</div><div class="td l" style="left:310px;width:90px">2 Queen Beds …</div><div class="td l" style="left:400px;width:35px">Mon</div><div class="td l n" style="left:435px;width:68px">03/04/2017</div><div class="td l" style="left:503px;width:35px">Mon</div><div class="td l n" style="left:538px;width:68px">17/04/2017</div><div class="td l" style="left:606px;width:62px">Bonotel</div><div class="td c" style="left:668px;width:25px"></div><div class="td c" style="left:693px;width:25px"></div><div class="td c" style="left:718px;width:25px"></div><div class="td r" style="left:743px;width:55px">1,428.42</div><div class="td r" style="left:798px;width:55px">357.11</div><div class="td r" style="left:853px;width:65px">1,428.42</div><div class="td r" style="left:918px;width:55px">0.00</div><div class="td c" style="left:973px;width:25px"></div><div class="td l x" style="left:998px;width:60px">XML</div><div class="td l" style="left:1058px;width:75px"></div></div>
<div class="tr" style="top:202px"><div class="td l" style="left:0px;width:75px">Orlando (FL)</div><div class="td l u" style="left:75px;width:120px">BEST WESTERN PLUS…</div><div class="td l" style="left:195px;width:40px">3star</div><div class="td l" style="left:235px;width:75px">American Br…</div><div class="td l" style="left:310px;width:90px">2 Queen Beds …</div><div class="td l" style="left:400px;width:35px">Mon</div><div class="td l n" style="left:435px;width:68px">03/04/2017</div><div class="td l" style="left:503px;width:35px">Mon</div><div class="td l n" style="left:538px;width:68px">17/04/2017</div><div class="td l" style="left:606px;width:62px">Bonotel</div><div class="td c" style="left:668px;width:25px"></div><div class="td c" style="left:693px;width:25px"></div><div class="td c" style="left:718px;width:25px"></div><div class="td r" style="left:743px;width:55px">1,428.42</div><div class="td r" style="left:798px;width:55px">357.11</div><div class="td r" style="left:853px;width:65px">1,428.42</div><div class="td r" style="left:918px;width:55px">0.00</div><div class="td c" style="left:973px;width:25px"></div><div class="td l x" style="left:998px;width:60px">XML</div><div class="td l" style="left:1058px;width:75px"></div></div>
<div class="tr" style="top:217px"><div class="td l" style="left:0px;width:75px">Orlando (FL)</div><div class="td l u" style="left:75px;width:120px">BEST WESTERN PLUS…</div><div class="td l" style="left:195px;width:40px">3star</div><div class="td l" style="left:235px;width:75px">American Br…</div><div class="td l" style="left:310px;width:90px">2 Queen Beds …</div><div class="td l" style="left:400px;width:35px">Mon</div><div class="td l n" style="left:435px;width:68px">03/04/2017</div><div class="td l" style="left:503px;width:35px">Mon</div><div class="td l n" style="left:538px;width:68px">17/04/2017</div><div class="td l" style="left:606px;width:62px">Bonotel</div><div class="td c" style="left:668px;width:25px"></div><div class="td c" style="left:693px;width:25px"></div><div class="td c" style="left:718px;width:25px"></div><div class="td r" style="left:743px;width:55px">1,428.42</div><div class="td r" style="left:798px;width:55px">357.11</div><div class="td r" style="left:853px;width:65px">1,428.42</div><div class="td r" style="left:918px;width:55px">0.00</div><div class="td c" style="left:973px;width:25px"></div><div class="td l x" style="left:998px;width:60px">XML</div><div class="td l" style="left:1058px;width:75px"></div></div>
<div class="tr sel" style="top:232px"><div class="td l" style="left:0px;width:75px">Orlando Ar…</div><div class="td l" style="left:75px;width:120px">Disney Area Executiv…</div><div class="td l" style="left:195px;width:40px">Exe…</div><div class="td l" style="left:235px;width:75px">Room Only</div><div class="td l" style="left:310px;width:90px">4 Bedroom Exe…</div><div class="td l" style="left:400px;width:35px">Mon</div><div class="td l n" style="left:435px;width:68px">03/04/2017</div><div class="td l" style="left:503px;width:35px">Mon</div><div class="td l n" style="left:538px;width:68px">17/04/2017</div><div class="td l" style="left:606px;width:62px">Ocean B…</div><div class="td c" style="left:668px;width:25px">*</div><div class="td c" style="left:693px;width:25px"></div><div class="td c" style="left:718px;width:25px"></div><div class="td r" style="left:743px;width:55px">1,668.80</div><div class="td r" style="left:798px;width:55px">417.20</div><div class="td r" style="left:853px;width:65px">1,668.80</div><div class="td r" style="left:918px;width:55px">0.00</div><div class="td c" style="left:973px;width:25px"></div><div class="td l x" style="left:998px;width:60px">XML</div><div class="td l" style="left:1058px;width:75px"></div></div>
<div class="tr" style="top:247px"><div class="td l" style="left:0px;width:75px">Orlando Ar…</div><div class="td l" style="left:75px;width:120px">Marbella Executive Pl…</div><div class="td l" style="left:195px;width:40px">Exe…</div><div class="td l" style="left:235px;width:75px">Room Only</div><div class="td l" style="left:310px;width:90px">4 Bedroom Exe…</div><div class="td l" style="left:400px;width:35px">Mon</div><div class="td l n" style="left:435px;width:68px">03/04/2017</div><div class="td l" style="left:503px;width:35px">Mon</div><div class="td l n" style="left:538px;width:68px">17/04/2017</div><div class="td l" style="left:606px;width:62px">Ocean B…</div><div class="td c" style="left:668px;width:25px">*</div><div class="td c" style="left:693px;width:25px"></div><div class="td c" style="left:718px;width:25px"></div><div class="td r" style="left:743px;width:55px">1,747.20</div><div class="td r" style="left:798px;width:55px">436.80</div><div class="td r" style="left:853px;width:65px">1,747.20</div><div class="td r" style="left:918px;width:55px">0.00</div><div class="td c" style="left:973px;width:25px"></div><div class="td l x" style="left:998px;width:60px">XML</div><div class="td l" style="left:1058px;width:75px"></div></div>
<div class="tr" style="top:262px"><div class="td l" style="left:0px;width:75px">Orlando Ar…</div><div class="td l" style="left:75px;width:120px">Legacy Park Executiv…</div><div class="td l" style="left:195px;width:40px">Exe…</div><div class="td l" style="left:235px;width:75px">Room Only</div><div class="td l" style="left:310px;width:90px">4 Bedroom Exe…</div><div class="td l" style="left:400px;width:35px">Mon</div><div class="td l n" style="left:435px;width:68px">03/04/2017</div><div class="td l" style="left:503px;width:35px">Mon</div><div class="td l n" style="left:538px;width:68px">17/04/2017</div><div class="td l" style="left:606px;width:62px">Ocean B…</div><div class="td c" style="left:668px;width:25px">*</div><div class="td c" style="left:693px;width:25px"></div><div class="td c" style="left:718px;width:25px"></div><div class="td r" style="left:743px;width:55px">1,747.20</div><div class="td r" style="left:798px;width:55px">436.80</div><div class="td r" style="left:853px;width:65px">1,747.20</div><div class="td r" style="left:918px;width:55px">0.00</div><div class="td c" style="left:973px;width:25px"></div><div class="td l x" style="left:998px;width:60px">XML</div><div class="td l" style="left:1058px;width:75px"></div></div>
<div class="tr" style="top:277px"><div class="td l" style="left:0px;width:75px">Orlando Ar…</div><div class="td l" style="left:75px;width:120px">Trafalgar Village Exe…</div><div class="td l" style="left:195px;width:40px">Exe…</div><div class="td l" style="left:235px;width:75px">Room Only</div><div class="td l" style="left:310px;width:90px">4 Bedroom Exe…</div><div class="td l" style="left:400px;width:35px">Mon</div><div class="td l n" style="left:435px;width:68px">03/04/2017</div><div class="td l" style="left:503px;width:35px">Mon</div><div class="td l n" style="left:538px;width:68px">17/04/2017</div><div class="td l" style="left:606px;width:62px">Ocean B…</div><div class="td c" style="left:668px;width:25px">*</div><div class="td c" style="left:693px;width:25px"></div><div class="td c" style="left:718px;width:25px"></div><div class="td r" style="left:743px;width:55px">1,747.20</div><div class="td r" style="left:798px;width:55px">436.80</div><div class="td r" style="left:853px;width:65px">1,747.20</div><div class="td r" style="left:918px;width:55px">0.00</div><div class="td c" style="left:973px;width:25px"></div><div class="td l x" style="left:998px;width:60px">XML</div><div class="td l" style="left:1058px;width:75px"></div></div>
<div class="tr" style="top:292px"><div class="td l" style="left:0px;width:75px">Orlando Ar…</div><div class="td l" style="left:75px;width:120px">Calabay Parc At Tow…</div><div class="td l" style="left:195px;width:40px">Exe…</div><div class="td l" style="left:235px;width:75px">Room Only</div><div class="td l" style="left:310px;width:90px">4 Bedroom Exe…</div><div class="td l" style="left:400px;width:35px">Mon</div><div class="td l n" style="left:435px;width:68px">03/04/2017</div><div class="td l" style="left:503px;width:35px">Mon</div><div class="td l n" style="left:538px;width:68px">17/04/2017</div><div class="td l" style="left:606px;width:62px">Ocean B…</div><div class="td c" style="left:668px;width:25px">*</div><div class="td c" style="left:693px;width:25px"></div><div class="td c" style="left:718px;width:25px"></div><div class="td r" style="left:743px;width:55px">1,747.20</div><div class="td r" style="left:798px;width:55px">436.80</div><div class="td r" style="left:853px;width:65px">1,747.20</div><div class="td r" style="left:918px;width:55px">0.00</div><div class="td c" style="left:973px;width:25px"></div><div class="td l x" style="left:998px;width:60px">XML</div><div class="td l" style="left:1058px;width:75px"></div></div>
<div class="tr" style="top:307px"><div class="td l" style="left:0px;width:75px">Orlando Ar…</div><div class="td l" style="left:75px;width:120px">Calabay Parc Executi…</div><div class="td l" style="left:195px;width:40px">Exe…</div><div class="td l" style="left:235px;width:75px">Room Only</div><div class="td l" style="left:310px;width:90px">4 Bedroom Exe…</div><div class="td l" style="left:400px;width:35px">Mon</div><div class="td l n" style="left:435px;width:68px">03/04/2017</div><div class="td l" style="left:503px;width:35px">Mon</div><div class="td l n" style="left:538px;width:68px">17/04/2017</div><div class="td l" style="left:606px;width:62px">Ocean B…</div><div class="td c" style="left:668px;width:25px">*</div><div class="td c" style="left:693px;width:25px"></div><div class="td c" style="left:718px;width:25px"></div><div class="td r" style="left:743px;width:55px">1,747.20</div><div class="td r" style="left:798px;width:55px">436.80</div><div class="td r" style="left:853px;width:65px">1,747.20</div><div class="td r" style="left:918px;width:55px">0.00</div><div class="td c" style="left:973px;width:25px"></div><div class="td l x" style="left:998px;width:60px">XML</div><div class="td l" style="left:1058px;width:75px"></div></div>
<div class="tr" style="top:322px"><div class="td l" style="left:0px;width:75px">Orlando Ar…</div><div class="td l" style="left:75px;width:120px">Disney Area Executiv…</div><div class="td l" style="left:195px;width:40px">Exe…</div><div class="td l" style="left:235px;width:75px">Room Only</div><div class="td l" style="left:310px;width:90px">5 Bedroom Exe…</div><div class="td l" style="left:400px;width:35px">Mon</div><div class="td l n" style="left:435px;width:68px">03/04/2017</div><div class="td l" style="left:503px;width:35px">Mon</div><div class="td l n" style="left:538px;width:68px">17/04/2017</div><div class="td l" style="left:606px;width:62px">Ocean B…</div><div class="td c" style="left:668px;width:25px">*</div><div class="td c" style="left:693px;width:25px"></div><div class="td c" style="left:718px;width:25px"></div><div class="td r" style="left:743px;width:55px">1,803.20</div><div class="td r" style="left:798px;width:55px">450.80</div><div class="td r" style="left:853px;width:65px">1,803.20</div><div class="td r" style="left:918px;width:55px">0.00</div><div class="td c" style="left:973px;width:25px"></div><div class="td l x" style="left:998px;width:60px">XML</div><div class="td l" style="left:1058px;width:75px"></div></div>
<div class="tr" style="top:337px"><div class="td l" style="left:0px;width:75px">Orlando Ar…</div><div class="td l" style="left:75px;width:120px">West Haven Executi…</div><div class="td l" style="left:195px;width:40px">Exe…</div><div class="td l" style="left:235px;width:75px">Room Only</div><div class="td l" style="left:310px;width:90px">4 Bedroom Exe…</div><div class="td l" style="left:400px;width:35px">Mon</div><div class="td l n" style="left:435px;width:68px">03/04/2017</div><div class="td l" style="left:503px;width:35px">Mon</div><div class="td l n" style="left:538px;width:68px">17/04/2017</div><div class="td l" style="left:606px;width:62px">Ocean B…</div><div class="td c" style="left:668px;width:25px">*</div><div class="td c" style="left:693px;width:25px"></div><div class="td c" style="left:718px;width:25px"></div><div class="td r" style="left:743px;width:55px">1,836.80</div><div class="td r" style="left:798px;width:55px">459.20</div><div class="td r" style="left:853px;width:65px">1,836.80</div><div class="td r" style="left:918px;width:55px">0.00</div><div class="td c" style="left:973px;width:25px"></div><div class="td l x" style="left:998px;width:60px">XML</div><div class="td l" style="left:1058px;width:75px"></div></div>
<div class="tr" style="top:352px"><div class="td l" style="left:0px;width:75px">Orlando Ar…</div><div class="td l" style="left:75px;width:120px">Glenbrook Executive …</div><div class="td l" style="left:195px;width:40px">Exe…</div><div class="td l" style="left:235px;width:75px">Room Only</div><div class="td l" style="left:310px;width:90px">4 Bedroom Exe…</div><div class="td l" style="left:400px;width:35px">Mon</div><div class="td l n" style="left:435px;width:68px">03/04/2017</div><div class="td l" style="left:503px;width:35px">Mon</div><div class="td l n" style="left:538px;width:68px">17/04/2017</div><div class="td l" style="left:606px;width:62px">Ocean B…</div><div class="td c" style="left:668px;width:25px">*</div><div class="td c" style="left:693px;width:25px"></div><div class="td c" style="left:718px;width:25px"></div><div class="td r" style="left:743px;width:55px">1,836.80</div><div class="td r" style="left:798px;width:55px">459.20</div><div class="td r" style="left:853px;width:65px">1,836.80</div><div class="td r" style="left:918px;width:55px">0.00</div><div class="td c" style="left:973px;width:25px"></div><div class="td l x" style="left:998px;width:60px">XML</div><div class="td l" style="left:1058px;width:75px"></div></div>
<div class="tr" style="top:367px"><div class="td l" style="left:0px;width:75px">Orlando Ar…</div><div class="td l" style="left:75px;width:120px">Highlands Reserve E…</div><div class="td l" style="left:195px;width:40px">Exe…</div><div class="td l" style="left:235px;width:75px">Room Only</div><div class="td l" style="left:310px;width:90px">4 Bedroom Exe…</div><div class="td l" style="left:400px;width:35px">Mon</div><div class="td l n" style="left:435px;width:68px">03/04/2017</div><div class="td l" style="left:503px;width:35px">Mon</div><div class="td l n" style="left:538px;width:68px">17/04/2017</div><div class="td l" style="left:606px;width:62px">Ocean B…</div><div class="td c" style="left:668px;width:25px">*</div><div class="td c" style="left:693px;width:25px"></div><div class="td c" style="left:718px;width:25px"></div><div class="td r" style="left:743px;width:55px">1,870.40</div><div class="td r" style="left:798px;width:55px">467.60</div><div class="td r" style="left:853px;width:65px">1,870.40</div><div class="td r" style="left:918px;width:55px">0.00</div><div class="td c" style="left:973px;width:25px"></div><div class="td l x" style="left:998px;width:60px">XML</div><div class="td l" style="left:1058px;width:75px"></div></div>
<div class="tr" style="top:382px"><div class="td l" style="left:0px;width:75px">Disney Are…</div><div class="td l" style="left:75px;width:120px">High Grove Executiv…</div><div class="td l" style="left:195px;width:40px">Exe…</div><div class="td l" style="left:235px;width:75px">Room Only</div><div class="td l" style="left:310px;width:90px">4 Bedroom Exe…</div><div class="td l" style="left:400px;width:35px">Mon</div><div class="td l n" style="left:435px;width:68px">03/04/2017</div><div class="td l" style="left:503px;width:35px">Mon</div><div class="td l n" style="left:538px;width:68px">17/04/2017</div><div class="td l" style="left:606px;width:62px">Ocean B…</div><div class="td c" style="left:668px;width:25px">*</div><div class="td c" style="left:693px;width:25px"></div><div class="td c" style="left:718px;width:25px"></div><div class="td r" style="left:743px;width:55px">1,870.40</div><div class="td r" style="left:798px;width:55px">467.60</div><div class="td r" style="left:853px;width:65px">1,870.40</div><div class="td r" style="left:918px;width:55px">0.00</div><div class="td c" style="left:973px;width:25px"></div><div class="td l x" style="left:998px;width:60px">XML</div><div class="td l" style="left:1058px;width:75px"></div></div>
<div class="tr" style="top:397px"><div class="td l" style="left:0px;width:75px">Orlando Ar…</div><div class="td l" style="left:75px;width:120px">Marbella Executive Pl…</div><div class="td l" style="left:195px;width:40px">Exe…</div><div class="td l" style="left:235px;width:75px">Room Only</div><div class="td l" style="left:310px;width:90px">5 Bedroom Exe…</div><div class="td l" style="left:400px;width:35px">Mon</div><div class="td l n" style="left:435px;width:68px">03/04/2017</div><div class="td l" style="left:503px;width:35px">Mon</div><div class="td l n" style="left:538px;width:68px">17/04/2017</div><div class="td l" style="left:606px;width:62px">Ocean B…</div><div class="td c" style="left:668px;width:25px">*</div><div class="td c" style="left:693px;width:25px"></div><div class="td c" style="left:718px;width:25px"></div><div class="td r" style="left:743px;width:55px">1,904.00</div><div class="td r" style="left:798px;width:55px">476.00</div><div class="td r" style="left:853px;width:65px">1,904.00</div><div class="td r" style="left:918px;width:55px">0.00</div><div class="td c" style="left:973px;width:25px"></div><div class="td l x" style="left:998px;width:60px">XML</div><div class="td l" style="left:1058px;width:75px"></div></div>
<div class="tr" style="top:412px"><div class="td l" style="left:0px;width:75px">Orlando Ar…</div><div class="td l" style="left:75px;width:120px">Legacy Park Executiv…</div><div class="td l" style="left:195px;width:40px">Exe…</div><div class="td l" style="left:235px;width:75px">Room Only</div><div class="td l" style="left:310px;width:90px">5 Bedroom Exe…</div><div class="td l" style="left:400px;width:35px">Mon</div><div class="td l n" style="left:435px;width:68px">03/04/2017</div><div class="td l" style="left:503px;width:35px">Mon</div><div class="td l n" style="left:538px;width:68px">17/04/2017</div><div class="td l" style="left:606px;width:62px">Ocean B…</div><div class="td c" style="left:668px;width:25px">*</div><div class="td c" style="left:693px;width:25px"></div><div class="td c" style="left:718px;width:25px"></div><div class="td r" style="left:743px;width:55px">1,904.00</div><div class="td r" style="left:798px;width:55px">476.00</div><div class="td r" style="left:853px;width:65px">1,904.00</div><div class="td r" style="left:918px;width:55px">0.00</div><div class="td c" style="left:973px;width:25px"></div><div class="td l x" style="left:998px;width:60px">XML</div><div class="td l" style="left:1058px;width:75px"></div></div>
<div class="tr" style="top:427px"><div class="td l" style="left:0px;width:75px">Orlando Ar…</div><div class="td l" style="left:75px;width:120px">Trafalgar Village Exe…</div><div class="td l" style="left:195px;width:40px">Exe…</div><div class="td l" style="left:235px;width:75px">Room Only</div><div class="td l" style="left:310px;width:90px">5 Bedroom Exe…</div><div class="td l" style="left:400px;width:35px">Mon</div><div class="td l n" style="left:435px;width:68px">03/04/2017</div><div class="td l" style="left:503px;width:35px">Mon</div><div class="td l n" style="left:538px;width:68px">17/04/2017</div><div class="td l" style="left:606px;width:62px">Ocean B…</div><div class="td c" style="left:668px;width:25px">*</div><div class="td c" style="left:693px;width:25px"></div><div class="td c" style="left:718px;width:25px"></div><div class="td r" style="left:743px;width:55px">1,904.00</div><div class="td r" style="left:798px;width:55px">476.00</div><div class="td r" style="left:853px;width:65px">1,904.00</div><div class="td r" style="left:918px;width:55px">0.00</div><div class="td c" style="left:973px;width:25px"></div><div class="td l x" style="left:998px;width:60px">XML</div><div class="td l" style="left:1058px;width:75px"></div></div>
<div class="tr" style="top:442px"><div class="td l" style="left:0px;width:75px">Orlando Ar…</div><div class="td l" style="left:75px;width:120px">Calabay Parc At Tow…</div><div class="td l" style="left:195px;width:40px">Exe…</div><div class="td l" style="left:235px;width:75px">Room Only</div><div class="td l" style="left:310px;width:90px">5 Bedroom Exe…</div><div class="td l" style="left:400px;width:35px">Mon</div><div class="td l n" style="left:435px;width:68px">03/04/2017</div><div class="td l" style="left:503px;width:35px">Mon</div><div class="td l n" style="left:538px;width:68px">17/04/2017</div><div class="td l" style="left:606px;width:62px">Ocean B…</div><div class="td c" style="left:668px;width:25px">*</div><div class="td c" style="left:693px;width:25px"></div><div class="td c" style="left:718px;width:25px"></div><div class="td r" style="left:743px;width:55px">1,904.00</div><div class="td r" style="left:798px;width:55px">476.00</div><div class="td r" style="left:853px;width:65px">1,904.00</div><div class="td r" style="left:918px;width:55px">0.00</div><div class="td c" style="left:973px;width:25px"></div><div class="td l x" style="left:998px;width:60px">XML</div><div class="td l" style="left:1058px;width:75px"></div></div>
<div class="tr" style="top:457px"><div class="td l" style="left:0px;width:75px">Orlando Ar…</div><div class="td l" style="left:75px;width:120px">Calabay Parc Executi…</div><div class="td l" style="left:195px;width:40px">Exe…</div><div class="td l" style="left:235px;width:75px">Room Only</div><div class="td l" style="left:310px;width:90px">5 Bedroom Exe…</div><div class="td l" style="left:400px;width:35px">Mon</div><div class="td l n" style="left:435px;width:68px">03/04/2017</div><div class="td l" style="left:503px;width:35px">Mon</div><div class="td l n" style="left:538px;width:68px">17/04/2017</div><div class="td l" style="left:606px;width:62px">Ocean B…</div><div class="td c" style="left:668px;width:25px">*</div><div class="td c" style="left:693px;width:25px"></div><div class="td c" style="left:718px;width:25px"></div><div class="td r" style="left:743px;width:55px">1,904.00</div><div class="td r" style="left:798px;width:55px">476.00</div><div class="td r" style="left:853px;width:65px">1,904.00</div><div class="td r" style="left:918px;width:55px">0.00</div><div class="td c" style="left:973px;width:25px"></div><div class="td l x" style="left:998px;width:60px">XML</div><div class="td l" style="left:1058px;width:75px"></div></div>
<div class="tr" style="top:472px"><div class="td l" style="left:0px;width:75px">Orlando Ar…</div><div class="td l" style="left:75px;width:120px">West Haven Executi…</div><div class="td l" style="left:195px;width:40px">Exe…</div><div class="td l" style="left:235px;width:75px">Room Only</div><div class="td l" style="left:310px;width:90px">5 Bedroom Exe…</div><div class="td l" style="left:400px;width:35px">Mon</div><div class="td l n" style="left:435px;width:68px">03/04/2017</div><div class="td l" style="left:503px;width:35px">Mon</div><div class="td l n" style="left:538px;width:68px">17/04/2017</div><div class="td l" style="left:606px;width:62px">Ocean B…</div><div class="td c" style="left:668px;width:25px">*</div><div class="td c" style="left:693px;width:25px"></div><div class="td c" style="left:718px;width:25px"></div><div class="td r" style="left:743px;width:55px">1,993.60</div><div class="td r" style="left:798px;width:55px">498.40</div><div class="td r" style="left:853px;width:65px">1,993.60</div><div class="td r" style="left:918px;width:55px">0.00</div><div class="td c" style="left:973px;width:25px"></div><div class="td l x" style="left:998px;width:60px">XML</div><div class="td l" style="left:1058px;width:75px"></div></div>
<div class="tr" style="top:487px"><div class="td l" style="left:0px;width:75px">Orlando Ar…</div><div class="td l" style="left:75px;width:120px">Glenbrook Executive …</div><div class="td l" style="left:195px;width:40px">Exe…</div><div class="td l" style="left:235px;width:75px">Room Only</div><div class="td l" style="left:310px;width:90px">5 Bedroom Exe…</div><div class="td l" style="left:400px;width:35px">Mon</div><div class="td l n" style="left:435px;width:68px">03/04/2017</div><div class="td l" style="left:503px;width:35px">Mon</div><div class="td l n" style="left:538px;width:68px">17/04/2017</div><div class="td l" style="left:606px;width:62px">Ocean B…</div><div class="td c" style="left:668px;width:25px">*</div><div class="td c" style="left:693px;width:25px"></div><div class="td c" style="left:718px;width:25px"></div><div class="td r" style="left:743px;width:55px">1,993.60</div><div class="td r" style="left:798px;width:55px">498.40</div><div class="td r" style="left:853px;width:65px">1,993.60</div><div class="td r" style="left:918px;width:55px">0.00</div><div class="td c" style="left:973px;width:25px"></div><div class="td l x" style="left:998px;width:60px">XML</div><div class="td l" style="left:1058px;width:75px"></div></div>
<div class="tr" style="top:502px"><div class="td l" style="left:0px;width:75px">Orlando Pri…</div><div class="td l" style="left:75px;width:120px">Disney Area Executiv…</div><div class="td l" style="left:195px;width:40px">4.0</div><div class="td l" style="left:235px;width:75px">Self Catering</div><div class="td l" style="left:310px;width:90px">4 Bedroom Exe…</div><div class="td l" style="left:400px;width:35px">Mon</div><div class="td l n" style="left:435px;width:68px">03/04/2017</div><div class="td l" style="left:503px;width:35px">Mon</div><div class="td l n" style="left:538px;width:68px">17/04/2017</div><div class="td l" style="left:606px;width:62px">Get A Bed</div><div class="td c" style="left:668px;width:25px">*</div><div class="td c" style="left:693px;width:25px"></div><div class="td c" style="left:718px;width:25px"></div><div class="td r" style="left:743px;width:55px">2,006.76</div><div class="td r" style="left:798px;width:55px">501.69</div><div class="td r" style="left:853px;width:65px">2,006.76</div><div class="td r" style="left:918px;width:55px">0.00</div><div class="td c" style="left:973px;width:25px"></div><div class="td l x" style="left:998px;width:60px">XML</div><div class="td l" style="left:1058px;width:75px"></div></div>
<div class="tr" style="top:517px"><div class="td l" style="left:0px;width:75px">Orlando Ar…</div><div class="td l" style="left:75px;width:120px">Highlands Reserve E…</div><div class="td l" style="left:195px;width:40px">Exe…</div><div class="td l" style="left:235px;width:75px">Room Only</div><div class="td l" style="left:310px;width:90px">5 Bedroom Exe…</div><div class="td l" style="left:400px;width:35px">Mon</div><div class="td l n" style="left:435px;width:68px">03/04/2017</div><div class="td l" style="left:503px;width:35px">Mon</div><div class="td l n" style="left:538px;width:68px">17/04/2017</div><div class="td l" style="left:606px;width:62px">Ocean B…</div><div class="td c" style="left:668px;width:25px">*</div><div class="td c" style="left:693px;width:25px"></div><div class="td c" style="left:718px;width:25px"></div><div class="td r" style="left:743px;width:55px">2,027.20</div><div class="td r" style="left:798px;width:55px">506.80</div><div class="td r" style="left:853px;width:65px">2,027.20</div><div class="td r" style="left:918px;width:55px">0.00</div><div class="td c" style="left:973px;width:25px"></div><div class="td l x" style="left:998px;width:60px">XML</div><div class="td l" style="left:1058px;width:75px"></div></div>
<div class="tr" style="top:532px"><div class="td l" style="left:0px;width:75px">Disney Are…</div><div class="td l" style="left:75px;width:120px">High Grove Executiv…</div><div class="td l" style="left:195px;width:40px">Exe…</div><div class="td l" style="left:235px;width:75px">Room Only</div><div class="td l" style="left:310px;width:90px">5 Bedroom Exe…</div><div class="td l" style="left:400px;width:35px">Mon</div><div class="td l n" style="left:435px;width:68px">03/04/2017</div><div class="td l" style="left:503px;width:35px">Mon</div><div class="td l n" style="left:538px;width:68px">17/04/2017</div><div class="td l" style="left:606px;width:62px">Ocean B…</div><div class="td c" style="left:668px;width:25px">*</div><div class="td c" style="left:693px;width:25px"></div><div class="td c" style="left:718px;width:25px"></div><div class="td r" style="left:743px;width:55px">2,038.40</div><div class="td r" style="left:798px;width:55px">509.60</div><div class="td r" style="left:853px;width:65px">2,038.40</div><div class="td r" style="left:918px;width:55px">0.00</div><div class="td c" style="left:973px;width:25px"></div><div class="td l x" style="left:998px;width:60px">XML</div><div class="td l" style="left:1058px;width:75px"></div></div>
<div class="tr" style="top:547px"><div class="td l" style="left:0px;width:75px">Orlando Ar…</div><div class="td l" style="left:75px;width:120px">Disney Area Executiv…</div><div class="td l" style="left:195px;width:40px">Exe…</div><div class="td l" style="left:235px;width:75px">Room Only</div><div class="td l" style="left:310px;width:90px">6 Bedroom Exe…</div><div class="td l" style="left:400px;width:35px">Mon</div><div class="td l n" style="left:435px;width:68px">03/04/2017</div><div class="td l" style="left:503px;width:35px">Mon</div><div class="td l n" style="left:538px;width:68px">17/04/2017</div><div class="td l" style="left:606px;width:62px">Ocean B…</div><div class="td c" style="left:668px;width:25px">*</div><div class="td c" style="left:693px;width:25px"></div><div class="td c" style="left:718px;width:25px"></div><div class="td r" style="left:743px;width:55px">2,083.20</div><div class="td r" style="left:798px;width:55px">520.80</div><div class="td r" style="left:853px;width:65px">2,083.20</div><div class="td r" style="left:918px;width:55px">0.00</div><div class="td c" style="left:973px;width:25px"></div><div class="td l x" style="left:998px;width:60px">XML</div><div class="td l" style="left:1058px;width:75px"></div></div>
<div class="tr" style="top:562px"><div class="td l" style="left:0px;width:75px">Orlando Pri…</div><div class="td l" style="left:75px;width:120px">Disney Area Executiv…</div><div class="td l" style="left:195px;width:40px">4.0</div><div class="td l" style="left:235px;width:75px">Self Catering</div><div class="td l" style="left:310px;width:90px">5 Bedroom Exe…</div><div class="td l" style="left:400px;width:35px">Mon</div><div class="td l n" style="left:435px;width:68px">03/04/2017</div><div class="td l" style="left:503px;width:35px">Mon</div><div class="td l n" style="left:538px;width:68px">17/04/2017</div><div class="td l" style="left:606px;width:62px">Get A Bed</div><div class="td c" style="left:668px;width:25px">*</div><div class="td c" style="left:693px;width:25px"></div><div class="td c" style="left:718px;width:25px"></div><div class="td r" style="left:743px;width:55px">2,157.26</div><div class="td r" style="left:798px;width:55px">539.32</div><div class="td r" style="left:853px;width:65px">2,157.26</div><div class="td r" style="left:918px;width:55px">0.00</div><div class="td c" style="left:973px;width:25px"></div><div class="td l x" style="left:998px;width:60px">XML</div><div class="td l" style="left:1058px;width:75px"></div></div>
<div class="tr" style="top:577px"><div class="td l" style="left:0px;width:75px">Orlando Ar…</div><div class="td l" style="left:75px;width:120px">Watersong Resort E…</div><div class="td l" style="left:195px;width:40px">Exe…</div><div class="td l" style="left:235px;width:75px">Room Only</div><div class="td l" style="left:310px;width:90px">4 Bedroom Exe…</div><div class="td l" style="left:400px;width:35px">Mon</div><div class="td l n" style="left:435px;width:68px">03/04/2017</div><div class="td l" style="left:503px;width:35px">Mon</div><div class="td l n" style="left:538px;width:68px">17/04/2017</div><div class="td l" style="left:606px;width:62px">Ocean B…</div><div class="td c" style="left:668px;width:25px">*</div><div class="td c" style="left:693px;width:25px"></div><div class="td c" style="left:718px;width:25px"></div><div class="td r" style="left:743px;width:55px">2,184.00</div><div class="td r" style="left:798px;width:55px">546.00</div><div class="td r" style="left:853px;width:65px">2,184.00</div><div class="td r" style="left:918px;width:55px">0.00</div><div class="td c" style="left:973px;width:25px"></div><div class="td l x" style="left:998px;width:60px">XML</div><div class="td l" style="left:1058px;width:75px"></div></div>
<div class="tr" style="top:592px"><div class="td l" style="left:0px;width:75px">Orlando Ar…</div><div class="td l" style="left:75px;width:120px">Solana Resort Execu…</div><div class="td l" style="left:195px;width:40px">Exe…</div><div class="td l" style="left:235px;width:75px">Room Only</div><div class="td l" style="left:310px;width:90px">4 Bedroom Exe…</div><div class="td l" style="left:400px;width:35px">Mon</div><div class="td l n" style="left:435px;width:68px">03/04/2017</div><div class="td l" style="left:503px;width:35px">Mon</div><div class="td l n" style="left:538px;width:68px">17/04/2017</div><div class="td l" style="left:606px;width:62px">Ocean B…</div><div class="td c" style="left:668px;width:25px">*</div><div class="td c" style="left:693px;width:25px"></div><div class="td c" style="left:718px;width:25px"></div><div class="td r" style="left:743px;width:55px">2,184.00</div><div class="td r" style="left:798px;width:55px">546.00</div><div class="td r" style="left:853px;width:65px">2,184.00</div><div class="td r" style="left:918px;width:55px">0.00</div><div class="td c" style="left:973px;width:25px"></div><div class="td l x" style="left:998px;width:60px">XML</div><div class="td l" style="left:1058px;width:75px"></div></div>
<div class="tr" style="top:607px"><div class="td l" style="left:0px;width:75px">Orlando Ar…</div><div class="td l" style="left:75px;width:120px">Windsor Palms Resor…</div><div class="td l" style="left:195px;width:40px">Exe…</div><div class="td l" style="left:235px;width:75px">Room Only</div><div class="td l" style="left:310px;width:90px">4 Bedroom Exe…</div><div class="td l" style="left:400px;width:35px">Mon</div><div class="td l n" style="left:435px;width:68px">03/04/2017</div><div class="td l" style="left:503px;width:35px">Mon</div><div class="td l n" style="left:538px;width:68px">17/04/2017</div><div class="td l" style="left:606px;width:62px">Ocean B…</div><div class="td c" style="left:668px;width:25px">*</div><div class="td c" style="left:693px;width:25px"></div><div class="td c" style="left:718px;width:25px"></div><div class="td r" style="left:743px;width:55px">2,184.00</div><div class="td r" style="left:798px;width:55px">546.00</div><div class="td r" style="left:853px;width:65px">2,184.00</div><div class="td r" style="left:918px;width:55px">0.00</div><div class="td c" style="left:973px;width:25px"></div><div class="td l x" style="left:998px;width:60px">XML</div><div class="td l" style="left:1058px;width:75px"></div></div>
<div class="tr" style="top:622px"><div class="td l" style="left:0px;width:75px">Orlando Ar…</div><div class="td l" style="left:75px;width:120px">Emerald Island Resor…</div><div class="td l" style="left:195px;width:40px">Exe…</div><div class="td l" style="left:235px;width:75px">Room Only</div><div class="td l" style="left:310px;width:90px">4 Bedroom Exe…</div><div class="td l" style="left:400px;width:35px">Mon</div><div class="td l n" style="left:435px;width:68px">03/04/2017</div><div class="td l" style="left:503px;width:35px">Mon</div><div class="td l n" style="left:538px;width:68px">17/04/2017</div><div class="td l" style="left:606px;width:62px">Ocean B…</div><div class="td c" style="left:668px;width:25px">*</div><div class="td c" style="left:693px;width:25px"></div><div class="td c" style="left:718px;width:25px"></div><div class="td r" style="left:743px;width:55px">2,184.00</div><div class="td r" style="left:798px;width:55px">546.00</div><div class="td r" style="left:853px;width:65px">2,184.00</div><div class="td r" style="left:918px;width:55px">0.00</div><div class="td c" style="left:973px;width:25px"></div><div class="td l x" style="left:998px;width:60px">XML</div><div class="td l" style="left:1058px;width:75px"></div></div>
<div class="tr" style="top:637px"><div class="td l" style="left:0px;width:75px">Orlando Pri…</div><div class="td l" style="left:75px;width:120px">Disney Area Executiv…</div><div class="td l" style="left:195px;width:40px">4.0</div><div class="td l" style="left:235px;width:75px">Self Catering</div><div class="td l" style="left:310px;width:90px">6 Bedroom Exe…</div><div class="td l" style="left:400px;width:35px">Mon</div><div class="td l n" style="left:435px;width:68px">03/04/2017</div><div class="td l" style="left:503px;width:35px">Mon</div><div class="td l n" style="left:538px;width:68px">17/04/2017</div><div class="td l" style="left:606px;width:62px">Get A Bed</div><div class="td c" style="left:668px;width:25px">*</div><div class="td c" style="left:693px;width:25px"></div><div class="td c" style="left:718px;width:25px"></div><div class="td r" style="left:743px;width:55px">2,383.02</div><div class="td r" style="left:798px;width:55px">595.76</div><div class="td r" style="left:853px;width:65px">2,383.02</div><div class="td r" style="left:918px;width:55px">0.00</div><div class="td c" style="left:973px;width:25px"></div><div class="td l x" style="left:998px;width:60px">XML</div><div class="td l" style="left:1058px;width:75px"></div></div>
<div class="tr" style="top:652px"><div class="td l" style="left:0px;width:75px">Orlando Ar…</div><div class="td l" style="left:75px;width:120px">Watersong Resort E…</div><div class="td l" style="left:195px;width:40px">Exe…</div><div class="td l" style="left:235px;width:75px">Room Only</div><div class="td l" style="left:310px;width:90px">5 Bedroom Exe…</div><div class="td l" style="left:400px;width:35px">Mon</div><div class="td l n" style="left:435px;width:68px">03/04/2017</div><div class="td l" style="left:503px;width:35px">Mon</div><div class="td l n" style="left:538px;width:68px">17/04/2017</div><div class="td l" style="left:606px;width:62px">Ocean B…</div><div class="td c" style="left:668px;width:25px">*</div><div class="td c" style="left:693px;width:25px"></div><div class="td c" style="left:718px;width:25px"></div><div class="td r" style="left:743px;width:55px">2,587.20</div><div class="td r" style="left:798px;width:55px">646.80</div><div class="td r" style="left:853px;width:65px">2,587.20</div><div class="td r" style="left:918px;width:55px">0.00</div><div class="td c" style="left:973px;width:25px"></div><div class="td l x" style="left:998px;width:60px">XML</div><div class="td l" style="left:1058px;width:75px"></div></div>
<div class="tr" style="top:667px"><div class="td l" style="left:0px;width:75px">Orlando Ar…</div><div class="td l" style="left:75px;width:120px">Solana Resort Execu…</div><div class="td l" style="left:195px;width:40px">Exe…</div><div class="td l" style="left:235px;width:75px">Room Only</div><div class="td l" style="left:310px;width:90px">5 Bedroom Exe…</div><div class="td l" style="left:400px;width:35px">Mon</div><div class="td l n" style="left:435px;width:68px">03/04/2017</div><div class="td l" style="left:503px;width:35px">Mon</div><div class="td l n" style="left:538px;width:68px">17/04/2017</div><div class="td l" style="left:606px;width:62px">Ocean B…</div><div class="td c" style="left:668px;width:25px">*</div><div class="td c" style="left:693px;width:25px"></div><div class="td c" style="left:718px;width:25px"></div><div class="td r" style="left:743px;width:55px">2,587.20</div><div class="td r" style="left:798px;width:55px">646.80</div><div class="td r" style="left:853px;width:65px">2,587.20</div><div class="td r" style="left:918px;width:55px">0.00</div><div class="td c" style="left:973px;width:25px"></div><div class="td l x" style="left:998px;width:60px">XML</div><div class="td l" style="left:1058px;width:75px"></div></div>
<div class="tr" style="top:682px"><div class="td l" style="left:0px;width:75px">Orlando Ar…</div><div class="td l" style="left:75px;width:120px">Windsor Palms Resor…</div><div class="td l" style="left:195px;width:40px">Exe…</div><div class="td l" style="left:235px;width:75px">Room Only</div><div class="td l" style="left:310px;width:90px">5 Bedroom Exe…</div><div class="td l" style="left:400px;width:35px">Mon</div><div class="td l n" style="left:435px;width:68px">03/04/2017</div><div class="td l" style="left:503px;width:35px">Mon</div><div class="td l n" style="left:538px;width:68px">17/04/2017</div><div class="td l" style="left:606px;width:62px">Ocean B…</div><div class="td c" style="left:668px;width:25px">*</div><div class="td c" style="left:693px;width:25px"></div><div class="td c" style="left:718px;width:25px"></div><div class="td r" style="left:743px;width:55px">2,587.20</div><div class="td r" style="left:798px;width:55px">646.80</div><div class="td r" style="left:853px;width:65px">2,587.20</div><div class="td r" style="left:918px;width:55px">0.00</div><div class="td c" style="left:973px;width:25px"></div><div class="td l x" style="left:998px;width:60px">XML</div><div class="td l" style="left:1058px;width:75px"></div></div>
<div class="tr" style="top:697px"><div class="td l" style="left:0px;width:75px">Orlando Ar…</div><div class="td l" style="left:75px;width:120px">Emerald Island Resor…</div><div class="td l" style="left:195px;width:40px">Exe…</div><div class="td l" style="left:235px;width:75px">Room Only</div><div class="td l" style="left:310px;width:90px">5 Bedroom Exe…</div><div class="td l" style="left:400px;width:35px">Mon</div><div class="td l n" style="left:435px;width:68px">03/04/2017</div><div class="td l" style="left:503px;width:35px">Mon</div><div class="td l n" style="left:538px;width:68px">17/04/2017</div><div class="td l" style="left:606px;width:62px">Ocean B…</div><div class="td c" style="left:668px;width:25px">*</div><div class="td c" style="left:693px;width:25px"></div><div class="td c" style="left:718px;width:25px"></div><div class="td r" style="left:743px;width:55px">2,587.20</div><div class="td r" style="left:798px;width:55px">646.80</div><div class="td r" style="left:853px;width:65px">2,587.20</div><div class="td r" style="left:918px;width:55px">0.00</div><div class="td c" style="left:973px;width:25px"></div><div class="td l x" style="left:998px;width:60px">XML</div><div class="td l" style="left:1058px;width:75px"></div></div>
<div class="tr" style="top:712px"><div class="td l" style="left:0px;width:75px">Orlando Ar…</div><div class="td l" style="left:75px;width:120px">Windsor Hills Resort …</div><div class="td l" style="left:195px;width:40px">Exe…</div><div class="td l" style="left:235px;width:75px">Room Only</div><div class="td l" style="left:310px;width:90px">5 Bedroom Exe…</div><div class="td l" style="left:400px;width:35px">Mon</div><div class="td l n" style="left:435px;width:68px">03/04/2017</div><div class="td l" style="left:503px;width:35px">Mon</div><div class="td l n" style="left:538px;width:68px">17/04/2017</div><div class="td l" style="left:606px;width:62px">Ocean B…</div><div class="td c" style="left:668px;width:25px">*</div><div class="td c" style="left:693px;width:25px"></div><div class="td c" style="left:718px;width:25px"></div><div class="td r" style="left:743px;width:55px">2,856.00</div><div class="td r" style="left:798px;width:55px">714.00</div><div class="td r" style="left:853px;width:65px">2,856.00</div><div class="td r" style="left:918px;width:55px">0.00</div><div class="td c" style="left:973px;width:25px"></div><div class="td l x" style="left:998px;width:60px">XML</div><div class="td l" style="left:1058px;width:75px"></div></div>
<div class="tr" style="top:727px"><div class="td l" style="left:0px;width:75px">Orlando Ar…</div><div class="td l" style="left:75px;width:120px">Watersong Resort E…</div><div class="td l" style="left:195px;width:40px">Exe…</div><div class="td l" style="left:235px;width:75px">Room Only</div><div class="td l" style="left:310px;width:90px">6 Bedroom Exe…</div><div class="td l" style="left:400px;width:35px">Mon</div><div class="td l n" style="left:435px;width:68px">03/04/2017</div><div class="td l" style="left:503px;width:35px">Mon</div><div class="td l n" style="left:538px;width:68px">17/04/2017</div><div class="td l" style="left:606px;width:62px">Ocean B…</div><div class="td c" style="left:668px;width:25px">*</div><div class="td c" style="left:693px;width:25px"></div><div class="td c" style="left:718px;width:25px"></div><div class="td r" style="left:743px;width:55px">2,968.00</div><div class="td r" style="left:798px;width:55px">742.00</div><div class="td r" style="left:853px;width:65px">2,968.00</div><div class="td r" style="left:918px;width:55px">0.00</div><div class="td c" style="left:973px;width:25px"></div><div class="td l x" style="left:998px;width:60px">XML</div><div class="td l" style="left:1058px;width:75px"></div></div>
<div class="tr" style="top:742px"><div class="td l" style="left:0px;width:75px">Orlando Ar…</div><div class="td l" style="left:75px;width:120px">Solana Resort Execu…</div><div class="td l" style="left:195px;width:40px">Exe…</div><div class="td l" style="left:235px;width:75px">Room Only</div><div class="td l" style="left:310px;width:90px">6 Bedroom Exe…</div><div class="td l" style="left:400px;width:35px">Mon</div><div class="td l n" style="left:435px;width:68px">03/04/2017</div><div class="td l" style="left:503px;width:35px">Mon</div><div class="td l n" style="left:538px;width:68px">17/04/2017</div><div class="td l" style="left:606px;width:62px">Ocean B…</div><div class="td c" style="left:668px;width:25px">*</div><div class="td c" style="left:693px;width:25px"></div><div class="td c" style="left:718px;width:25px"></div><div class="td r" style="left:743px;width:55px">2,968.00</div><div class="td r" style="left:798px;width:55px">742.00</div><div class="td r" style="left:853px;width:65px">2,968.00</div><div class="td r" style="left:918px;width:55px">0.00</div><div class="td c" style="left:973px;width:25px"></div><div class="td l x" style="left:998px;width:60px">XML</div><div class="td l" style="left:1058px;width:75px"></div></div>
<div id="sb" class="a"><div class="btn3d" style="left:0;top:0;width:16px;height:16px"><i class="a" style="left:3px;top:5px;border:4px solid transparent;border-top:0;border-bottom:4px solid #000"></i></div><div class="btn3d" style="left:0;top:16px;width:16px;height:543px"></div><div class="btn3d" style="left:0;top:587px;width:16px;height:16px"><i class="a" style="left:3px;top:5px;border:4px solid transparent;border-bottom:0;border-top:4px solid #000"></i></div></div>
<div class="a" style="left:222px;top:783px;white-space:nowrap;letter-spacing:0">First portion: 6.3 sec, total search time: 20.3 sec</div>
<div class="btn3d" style="left:1560px;top:778px;width:23px;height:22px"><span class="a" style="left:8px;top:-1px;font:bold 18px 'Liberation Serif',serif;color:#0A50A0;letter-spacing:0">i</span></div>
<div class="a" style="left:215px;top:805px;width:1378px;height:1px;background:#808080"></div>
<div class="btabs" style="left:215px;width:53px">Summary</div>
<div class="btabs" style="left:268px;width:41px">Search</div>
<div class="btabs" style="left:309px;top:805px;height:18px;line-height:18px;width:83px;background:#008000;color:#fff;border-radius:0 0 3px 3px;border-right:0;letter-spacing:-.35px">Acc 2A,2C MCO</div>
<div class="btabs" style="left:392px;width:51px;background:#C4FFC4">Car MCO</div>
<div class="btabs" style="left:443px;width:63px;background:#C4FFC4">Tour 2A,2C</div>
<div class="btabs" style="left:506px;width:96px">Financial Summary</div>
<div id="status" class="a"><span class="a" style="left:760px;white-space:nowrap">User: 415 - Hema Yoganathan</span><span class="a" style="left:916px;white-space:nowrap">Retailer: 'Ocean-Florida'</span><span class="a" style="left:1042px;white-space:nowrap">Client: none</span><span class="a" style="right:9px;white-space:nowrap">11:25 GMT</span></div>
<div id="tbline" class="a"></div>
<div id="start" class="a btn3d"><svg class="a" style="left:1px;top:9px" width="16" height="16" viewBox="0 0 16 16"><path d="M2.500 1.500C4.500 0 6.500 .5 8 1.500L7 7C5.500 6 3.500 5.800 1.300 7z" fill="#F0501C"/><path d="M8.800 2C10.500 3 12.500 3 15 1.500L13.800 7C12 8.500 9.500 8.300 7.800 7.300z" fill="#5CB82C"/><path d="M1 7.800C3 6.600 5 6.800 6.800 7.800L5.700 13C4 12 2 12 0 13.300z" fill="#3C8CE8"/><path d="M7.600 8.200C9.500 9.200 11.500 9.200 13.600 7.800L12.500 13C10.500 14.500 8.300 14.300 6.500 13.400z" fill="#FFC41C"/></svg><i class="a" style="left:18px;top:2px;width:30px;height:32px;border:1px dotted #000"></i><b class="a" style="left:19px;top:12px">Start</b></div>
<div id="task" class="a"><svg class="a" style="left:5px;top:8px" width="29" height="21" viewBox="0 0 28 20" preserveAspectRatio="none"><path d="M4 .5C7 -.3 10 .3 13 1.500C17 3 22 4 27.500 5.500C28.500 7 27.500 9 26 10.500L17 19C15.500 20.300 14 20.300 12.500 19L2 11.500C-.3 9.500 -.3 6.500 1.500 3.500C2.200 2 3 1 4 .5z" fill="url(#gg)"/></svg><b class="a" style="left:39px;top:12px;white-space:nowrap">Interactive - Ocea...</b></div>
<div id="tray" class="a"><svg class="a" style="left:6px;top:11px" width="16" height="16" viewBox="0 0 16 16"><path d="M0 0h8v8H0z" fill="#F0A020"/><path d="M8 0h8v8L8 5z" fill="#2080E0"/><path d="M0 8h8v8H0z" fill="#40A040"/><path d="M8 5l8 3v8H8z" fill="#E02818"/></svg><svg class="a" style="left:30px;top:13px" width="17" height="11" viewBox="0 0 17 11"><rect x=".5" y="1.500" width="12" height="6" fill="#30C030" stroke="#107010"/><path d="M3 9h7" stroke="#D0C020" stroke-width="2" stroke-dasharray="1 1"/><path d="M14 0v10M14 1h2.500M14 4h2" stroke="#000" stroke-width="1.200" fill="none"/><rect x="9" y="2.500" width="2" height="2" fill="#000"/></svg><svg class="a" style="left:54px;top:10px" width="17" height="17" viewBox="0 0 17 17"><rect x="4.500" y="3.500" width="11" height="9" fill="#C0C0C0" stroke="#606060"/><rect x="6" y="5" width="8" height="6" fill="#B0B0B0"/><path d="M6 15.500h8M10 12.500v3" stroke="#606060"/><path d="M1.500 1v4h3V1M3 5v10h3" stroke="#fff" stroke-width="2.400" fill="none"/><path d="M1.500 1v4h3V1M3 5v10h3" stroke="#505050" stroke-width="1" fill="none"/></svg><svg class="a" style="left:78px;top:10px" width="17" height="17" viewBox="0 0 17 17"><path d="M1.500 5.500h3l4-4v13l-4-4h-3z" fill="#E8E8E8" stroke="#707070"/><circle cx="11.500" cy="11" r="4.200" fill="#E81818"/><path d="M9.500 9l4 4M13.500 9l-4 4" stroke="#fff" stroke-width="1.500"/></svg><svg class="a" style="left:171px;top:13px" width="16" height="12" viewBox="0 0 16 12"><rect width="16" height="12" fill="#2C6CD0"/><rect x=".5" y=".5" width="15" height="11" fill="none" stroke="#88B0E8"/><rect x="1" y="9" width="14" height="2" fill="#101830"/><circle cx="3" cy="9.500" r="1.300" fill="#F0C020"/></svg><span class="a" style="left:100px;top:2px;width:70px;text-align:center;line-height:16px;letter-spacing:0">11:25<br>31/07/2016</span></div>

</div></body></html>
